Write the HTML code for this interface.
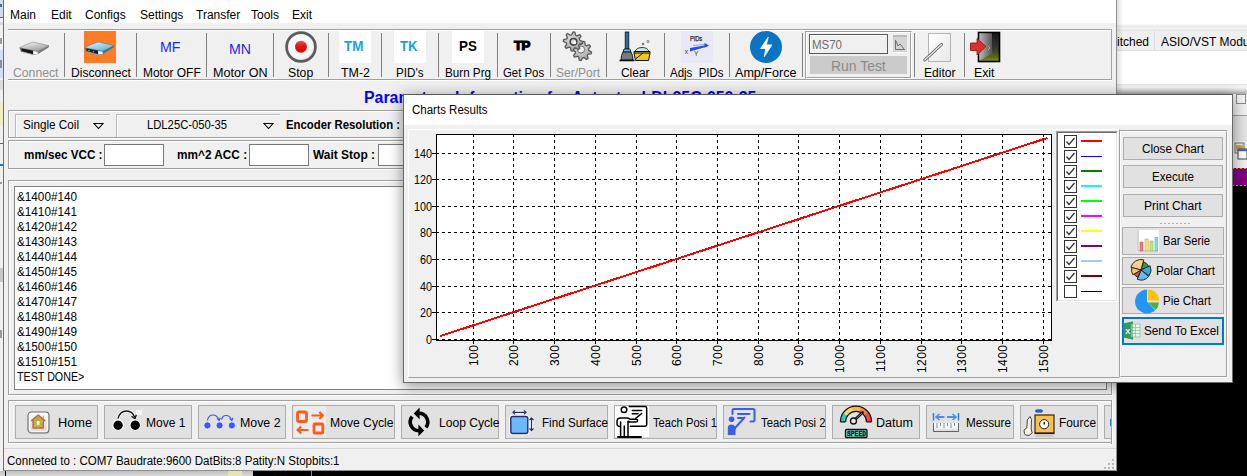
<!DOCTYPE html>
<html><head><meta charset="utf-8"><style>
html,body{margin:0;padding:0;}
body{width:1247px;height:476px;overflow:hidden;position:relative;font-family:'Liberation Sans', sans-serif;font-size:12px;}
.a{position:absolute;}
.t{position:absolute;white-space:pre;}
</style></head><body>
<div class="a" style="left:0px;top:0px;width:1247px;height:476px;background:#000"></div>
<div class="a" style="left:0px;top:0px;width:4px;height:471px;background:#f0f0f0"></div>
<div class="a" style="left:0px;top:0px;width:3px;height:17px;background:#d4dcea"></div>
<div class="a" style="left:0px;top:4px;width:2px;height:3px;background:#4070b0"></div>
<div class="a" style="left:0px;top:17px;width:3px;height:1px;background:#3a6ab0"></div>
<div class="a" style="left:0px;top:22px;width:3px;height:3px;background:#d8d8d8"></div>
<div class="a" style="left:0px;top:36px;width:3px;height:10px;background:#fafafa"></div>
<div class="a" style="left:0px;top:38px;width:2px;height:6px;background:#9a9a9a"></div>
<div class="a" style="left:0px;top:50px;width:3px;height:28px;background:#cfe0f4"></div>
<div class="a" style="left:0px;top:60px;width:2px;height:8px;background:#8a8aa0"></div>
<div class="a" style="left:0px;top:80px;width:3px;height:10px;background:#dcdcdc"></div>
<div class="a" style="left:0px;top:103px;width:3px;height:22px;background:#f2eec4"></div>
<div class="a" style="left:0px;top:143px;width:3px;height:1px;background:#666"></div>
<div class="a" style="left:0px;top:164px;width:3px;height:2px;background:#3070c0"></div>
<div class="a" style="left:0px;top:182px;width:2px;height:2px;background:#999"></div>
<div class="a" style="left:0px;top:268px;width:3px;height:14px;background:#c8c8c8"></div>
<div class="a" style="left:0px;top:330px;width:2px;height:8px;background:#999"></div>
<div class="a" style="left:0px;top:471px;width:253px;height:5px;background:linear-gradient(#c0c0c0,#dadada)"></div>
<div class="a" style="left:5px;top:471px;width:1px;height:5px;background:#000"></div>
<div class="a" style="left:228px;top:471px;width:14px;height:5px;background:#e8e4b0"></div>
<div class="a" style="left:311px;top:471px;width:1px;height:5px;background:#888"></div>
<div class="a" style="left:1117px;top:0px;width:130px;height:24px;background:#fff"></div>
<div class="a" style="left:1117px;top:24px;width:130px;height:7px;background:linear-gradient(#fff,#e8e8e8 30%,#f4f4f4 60%,#e0e0e0)"></div>
<div class="a" style="left:1117px;top:31px;width:130px;height:20px;background:#f0f0f0"></div>
<div class="a" style="left:1117px;top:50px;width:130px;height:1px;background:#dcdcdc"></div>
<div class="a" style="left:1154px;top:31px;width:1px;height:20px;background:#dcdcdc"></div>
<div class="t" style="left:1117.00px;top:36px;font-size:12px;line-height:12px;color:#000;">itched</div>
<div class="t" style="left:1161.00px;top:36px;font-size:12px;line-height:12px;color:#000;">ASIO/VST Module</div>
<div class="a" style="left:1117px;top:51px;width:130px;height:33px;background:#fff"></div>
<div class="a" style="left:1117px;top:84px;width:130px;height:10px;background:linear-gradient(#e4e4e4,#f8f8f8 30%,#dcdcdc 60%,#a8a8a8)"></div>
<div class="a" style="left:1232px;top:94px;width:15px;height:92px;background:#f0f0f0"></div>
<div class="a" style="left:1236px;top:94px;width:10px;height:10px;box-sizing:border-box;border:1px solid #8c8c8c;background:#f4f4f4"></div>
<div class="a" style="left:1232px;top:115px;width:15px;height:1px;background:#a0a0a0"></div>
<div class="a" style="left:1232px;top:116px;width:15px;height:25px;background:#e4e4e4"></div>
<div class="a" style="left:1232px;top:168px;width:15px;height:18px;background:#800080"></div>
<div class="a" style="left:1232px;top:168px;width:15px;height:1px;background:repeating-linear-gradient(90deg,#c8a800 0 2px,transparent 2px 4px)"></div>
<div class="a" style="left:1232px;top:185px;width:15px;height:1px;background:repeating-linear-gradient(90deg,#c8a800 0 2px,transparent 2px 4px)"></div>
<div class="a" style="left:3px;top:0px;width:1114px;height:471px;background:#f0f0f0;box-sizing:border-box;border-left:1px solid #707070;border-right:1px solid #909090;border-bottom:1px solid #909090"></div>
<div class="a" style="left:1117px;top:0px;width:6px;height:471px;background:linear-gradient(90deg,rgba(0,0,0,.12),rgba(0,0,0,0))"></div>
<div class="a" style="left:4px;top:0px;width:1112px;height:23px;background:#fff"></div>
<div class="t" style="left:10.00px;top:9px;font-size:12px;line-height:12px;color:#000;">Main</div>
<div class="t" style="left:51.00px;top:9px;font-size:12px;line-height:12px;color:#000;">Edit</div>
<div class="t" style="left:85.00px;top:9px;font-size:12px;line-height:12px;color:#000;">Configs</div>
<div class="t" style="left:140.00px;top:9px;font-size:12px;line-height:12px;color:#000;">Settings</div>
<div class="t" style="left:196.00px;top:9px;font-size:12px;line-height:12px;color:#000;">Transfer</div>
<div class="t" style="left:251.00px;top:9px;font-size:12px;line-height:12px;color:#000;">Tools</div>
<div class="t" style="left:292.00px;top:9px;font-size:12px;line-height:12px;color:#000;">Exit</div>
<div class="a" style="left:8px;top:29px;width:1104px;height:1px;background:#a0a0a0"></div>
<div class="a" style="left:8px;top:30px;width:1104px;height:1px;background:#fff"></div>
<div class="a" style="left:8px;top:79px;width:1104px;height:1px;background:#a0a0a0"></div>
<div class="a" style="left:8px;top:80px;width:1104px;height:1px;background:#fff"></div>
<div class="a" style="left:1111px;top:29px;width:1px;height:51px;background:#a0a0a0"></div>
<div class="a" style="left:64px;top:33px;width:1px;height:44px;background:#808080"></div>
<div class="a" style="left:136px;top:33px;width:1px;height:44px;background:#808080"></div>
<div class="a" style="left:206px;top:33px;width:1px;height:44px;background:#808080"></div>
<div class="a" style="left:273px;top:33px;width:1px;height:44px;background:#808080"></div>
<div class="a" style="left:328px;top:33px;width:1px;height:44px;background:#808080"></div>
<div class="a" style="left:381px;top:33px;width:1px;height:44px;background:#808080"></div>
<div class="a" style="left:438px;top:33px;width:1px;height:44px;background:#808080"></div>
<div class="a" style="left:497px;top:33px;width:1px;height:44px;background:#808080"></div>
<div class="a" style="left:550px;top:33px;width:1px;height:44px;background:#808080"></div>
<div class="a" style="left:606px;top:33px;width:1px;height:44px;background:#808080"></div>
<div class="a" style="left:664px;top:33px;width:1px;height:44px;background:#808080"></div>
<div class="a" style="left:729px;top:33px;width:1px;height:44px;background:#808080"></div>
<div class="a" style="left:802px;top:33px;width:1px;height:44px;background:#808080"></div>
<div class="a" style="left:914px;top:33px;width:1px;height:44px;background:#808080"></div>
<div class="a" style="left:964px;top:33px;width:1px;height:44px;background:#808080"></div>
<div class="t" style="left:12.75px;top:67px;font-size:12px;line-height:12px;color:#8f8f8f;transform:scaleX(1.0180);transform-origin:0 0;">Connect</div>
<div class="t" style="left:70.90px;top:67px;font-size:12px;line-height:12px;color:#000;transform:scaleX(1.0074);transform-origin:0 0;">Disconnect</div>
<div class="t" style="left:142.85px;top:67px;font-size:12px;line-height:12px;color:#000;transform:scaleX(0.9948);transform-origin:0 0;">Motor OFF</div>
<div class="t" style="left:212.55px;top:67px;font-size:12px;line-height:12px;color:#000;transform:scaleX(1.0479);transform-origin:0 0;">Motor ON</div>
<div class="t" style="left:288.00px;top:67px;font-size:12px;line-height:12px;color:#000;transform:scaleX(1.0208);transform-origin:0 0;">Stop</div>
<div class="t" style="left:340.70px;top:67px;font-size:12px;line-height:12px;color:#000;transform:scaleX(1.0359);transform-origin:0 0;">TM-2</div>
<div class="t" style="left:396.25px;top:67px;font-size:12px;line-height:12px;color:#000;transform:scaleX(0.9719);transform-origin:0 0;">PID's</div>
<div class="t" style="left:444.80px;top:67px;font-size:12px;line-height:12px;color:#000;transform:scaleX(0.9714);transform-origin:0 0;">Burn Prg</div>
<div class="t" style="left:503.25px;top:67px;font-size:12px;line-height:12px;color:#000;transform:scaleX(0.9480);transform-origin:0 0;">Get Pos</div>
<div class="t" style="left:556.25px;top:67px;font-size:12px;line-height:12px;color:#8f8f8f;transform:scaleX(1.0019);transform-origin:0 0;">Ser/Port</div>
<div class="t" style="left:621.25px;top:67px;font-size:12px;line-height:12px;color:#000;transform:scaleX(0.9939);transform-origin:0 0;">Clear</div>
<div class="t" style="left:670.25px;top:67px;font-size:12px;line-height:12px;color:#000;transform:scaleX(0.9551);transform-origin:0 0;">Adjs  PIDs</div>
<div class="t" style="left:735.25px;top:67px;font-size:12px;line-height:12px;color:#000;transform:scaleX(1.0480);transform-origin:0 0;">Amp/Force</div>
<div class="t" style="left:923.95px;top:67px;font-size:12px;line-height:12px;color:#000;transform:scaleX(1.0049);transform-origin:0 0;">Editor</div>
<div class="t" style="left:974.25px;top:67px;font-size:12px;line-height:12px;color:#000;transform:scaleX(1.0248);transform-origin:0 0;">Exit</div>
<svg class="a" style="left:1233px;top:142px;" width="14" height="18" viewBox="0 0 14 18"><rect x="2" y="1" width="9" height="10" fill="#f4e8b0" stroke="#555" stroke-width=".8"/>
<path d="M3 4 L10 4 M3 6 L10 6 M3 8 L10 8" stroke="#c04040" stroke-width=".8"/><path d="M3 5 L9 5" stroke="#40a040" stroke-width=".6"/>
<rect x="5" y="7" width="9" height="10" fill="#fff" stroke="#333" stroke-width=".9"/><rect x="5" y="7" width="9" height="2.2" fill="#3a6ad0"/></svg>
<div class="t" style="left:364.00px;top:90px;font-size:16px;line-height:16px;font-weight:bold;color:#0000ff;transform:scaleX(0.9933);transform-origin:0 0;">Parameters Information for Actuator LDL25C-050-35</div>
<div class="a" style="left:8px;top:110px;width:1105px;height:1px;background:#a0a0a0"></div>
<div class="a" style="left:8px;top:110px;width:1px;height:29px;background:#a0a0a0"></div>
<div class="a" style="left:9px;top:111px;width:1103px;height:1px;background:#fff"></div>
<div class="a" style="left:9px;top:111px;width:1px;height:27px;background:#fff"></div>
<div class="a" style="left:8px;top:137px;width:1104px;height:1px;background:#a0a0a0"></div>
<div class="a" style="left:1111px;top:110px;width:1px;height:28px;background:#a0a0a0"></div>
<div class="a" style="left:8px;top:138px;width:1105px;height:1px;background:#fff"></div>
<div class="a" style="left:1112px;top:110px;width:1px;height:29px;background:#fff"></div>
<div class="a" style="left:15px;top:114px;width:95px;height:1px;background:#b9b9b9"></div>
<div class="a" style="left:15px;top:114px;width:1px;height:23px;background:#b9b9b9"></div>
<div class="a" style="left:16px;top:115px;width:94px;height:1px;background:#fff"></div>
<div class="a" style="left:16px;top:115px;width:1px;height:22px;background:#fff"></div>
<div class="t" style="left:23.00px;top:119px;font-size:12px;line-height:12px;color:#000;transform:scaleX(0.9762);transform-origin:0 0;">Single Coil</div>
<svg class="a" style="left:93px;top:122px;" width="11" height="8" viewBox="0 0 11 8"><path d="M1 1.5 L10 1.5 L5.5 6.5 Z" fill="none" stroke="#000" stroke-width="1.1"/></svg>
<div class="a" style="left:116px;top:114px;width:164px;height:1px;background:#b9b9b9"></div>
<div class="a" style="left:116px;top:114px;width:1px;height:23px;background:#b9b9b9"></div>
<div class="a" style="left:117px;top:115px;width:163px;height:1px;background:#fff"></div>
<div class="a" style="left:117px;top:115px;width:1px;height:22px;background:#fff"></div>
<div class="t" style="left:147.00px;top:119px;font-size:12px;line-height:12px;color:#000;transform:scaleX(0.9369);transform-origin:0 0;">LDL25C-050-35</div>
<svg class="a" style="left:263px;top:122px;" width="11" height="8" viewBox="0 0 11 8"><path d="M1 1.5 L10 1.5 L5.5 6.5 Z" fill="none" stroke="#000" stroke-width="1.1"/></svg>
<div class="t" style="left:286.00px;top:119px;font-size:12px;line-height:12px;font-weight:bold;color:#000;transform:scaleX(0.9447);transform-origin:0 0;">Encoder Resolution :</div>
<div class="a" style="left:8px;top:140px;width:1105px;height:1px;background:#a0a0a0"></div>
<div class="a" style="left:8px;top:140px;width:1px;height:30px;background:#a0a0a0"></div>
<div class="a" style="left:9px;top:141px;width:1103px;height:1px;background:#fff"></div>
<div class="a" style="left:9px;top:141px;width:1px;height:28px;background:#fff"></div>
<div class="a" style="left:8px;top:168px;width:1104px;height:1px;background:#a0a0a0"></div>
<div class="a" style="left:1111px;top:140px;width:1px;height:29px;background:#a0a0a0"></div>
<div class="a" style="left:8px;top:169px;width:1105px;height:1px;background:#fff"></div>
<div class="a" style="left:1112px;top:140px;width:1px;height:30px;background:#fff"></div>
<div class="t" style="left:24.00px;top:149px;font-size:12px;line-height:12px;font-weight:bold;color:#000;transform:scaleX(0.9728);transform-origin:0 0;">mm/sec VCC :</div>
<div class="a" style="left:104px;top:144px;width:60px;height:22px;background:#fff;box-sizing:border-box;border:1px solid #7a7a7a"></div>
<div class="t" style="left:177.00px;top:149px;font-size:12px;line-height:12px;font-weight:bold;color:#000;transform:scaleX(0.9835);transform-origin:0 0;">mm^2 ACC :</div>
<div class="a" style="left:249px;top:144px;width:60px;height:22px;background:#fff;box-sizing:border-box;border:1px solid #7a7a7a"></div>
<div class="t" style="left:313.00px;top:149px;font-size:12px;line-height:12px;font-weight:bold;color:#000;transform:scaleX(0.9966);transform-origin:0 0;">Wait Stop :</div>
<div class="a" style="left:378px;top:144px;width:60px;height:22px;background:#fff;box-sizing:border-box;border:1px solid #7a7a7a"></div>
<div class="a" style="left:8px;top:180px;width:1105px;height:1px;background:#a0a0a0"></div>
<div class="a" style="left:8px;top:180px;width:1px;height:216px;background:#a0a0a0"></div>
<div class="a" style="left:9px;top:181px;width:1103px;height:1px;background:#fff"></div>
<div class="a" style="left:9px;top:181px;width:1px;height:214px;background:#fff"></div>
<div class="a" style="left:8px;top:394px;width:1104px;height:1px;background:#a0a0a0"></div>
<div class="a" style="left:1111px;top:180px;width:1px;height:215px;background:#a0a0a0"></div>
<div class="a" style="left:8px;top:395px;width:1105px;height:1px;background:#fff"></div>
<div class="a" style="left:1112px;top:180px;width:1px;height:216px;background:#fff"></div>
<div class="a" style="left:14px;top:186px;width:1093px;height:204px;background:#fff;box-sizing:border-box;border:1px solid #828282"></div>
<div class="t" style="left:16.50px;top:191px;font-size:12px;line-height:12px;color:#000;transform:scaleX(0.9773);transform-origin:0 0;">&amp;1400#140</div>
<div class="t" style="left:16.50px;top:206px;font-size:12px;line-height:12px;color:#000;transform:scaleX(0.9773);transform-origin:0 0;">&amp;1410#141</div>
<div class="t" style="left:16.50px;top:221px;font-size:12px;line-height:12px;color:#000;transform:scaleX(0.9773);transform-origin:0 0;">&amp;1420#142</div>
<div class="t" style="left:16.50px;top:236px;font-size:12px;line-height:12px;color:#000;transform:scaleX(0.9773);transform-origin:0 0;">&amp;1430#143</div>
<div class="t" style="left:16.50px;top:251px;font-size:12px;line-height:12px;color:#000;transform:scaleX(0.9773);transform-origin:0 0;">&amp;1440#144</div>
<div class="t" style="left:16.50px;top:266px;font-size:12px;line-height:12px;color:#000;transform:scaleX(0.9773);transform-origin:0 0;">&amp;1450#145</div>
<div class="t" style="left:16.50px;top:281px;font-size:12px;line-height:12px;color:#000;transform:scaleX(0.9773);transform-origin:0 0;">&amp;1460#146</div>
<div class="t" style="left:16.50px;top:296px;font-size:12px;line-height:12px;color:#000;transform:scaleX(0.9773);transform-origin:0 0;">&amp;1470#147</div>
<div class="t" style="left:16.50px;top:311px;font-size:12px;line-height:12px;color:#000;transform:scaleX(0.9773);transform-origin:0 0;">&amp;1480#148</div>
<div class="t" style="left:16.50px;top:326px;font-size:12px;line-height:12px;color:#000;transform:scaleX(0.9773);transform-origin:0 0;">&amp;1490#149</div>
<div class="t" style="left:16.50px;top:341px;font-size:12px;line-height:12px;color:#000;transform:scaleX(0.9773);transform-origin:0 0;">&amp;1500#150</div>
<div class="t" style="left:16.50px;top:356px;font-size:12px;line-height:12px;color:#000;transform:scaleX(0.9773);transform-origin:0 0;">&amp;1510#151</div>
<div class="t" style="left:16.50px;top:371px;font-size:12px;line-height:12px;color:#000;transform:scaleX(0.8919);transform-origin:0 0;">TEST DONE&gt;</div>
<div class="a" style="left:8px;top:400px;width:1105px;height:1px;background:#a0a0a0"></div>
<div class="a" style="left:8px;top:400px;width:1px;height:44px;background:#a0a0a0"></div>
<div class="a" style="left:9px;top:401px;width:1103px;height:1px;background:#fff"></div>
<div class="a" style="left:9px;top:401px;width:1px;height:42px;background:#fff"></div>
<div class="a" style="left:8px;top:442px;width:1104px;height:1px;background:#a0a0a0"></div>
<div class="a" style="left:1111px;top:400px;width:1px;height:43px;background:#a0a0a0"></div>
<div class="a" style="left:8px;top:443px;width:1105px;height:1px;background:#fff"></div>
<div class="a" style="left:1112px;top:400px;width:1px;height:44px;background:#fff"></div>
<div class="a" style="left:15px;top:405px;width:83px;height:34px;background:#e1e1e1;box-sizing:border-box;border:1px solid #adadad"></div>
<div class="t" style="left:58.00px;top:417px;font-size:12px;line-height:12px;color:#000;transform:scaleX(1.0622);transform-origin:0 0;">Home</div>
<div class="a" style="left:104px;top:405px;width:88px;height:34px;background:#e1e1e1;box-sizing:border-box;border:1px solid #adadad"></div>
<div class="t" style="left:146.00px;top:417px;font-size:12px;line-height:12px;color:#000;transform:scaleX(1.0038);transform-origin:0 0;">Move 1</div>
<div class="a" style="left:198px;top:405px;width:88px;height:34px;background:#e1e1e1;box-sizing:border-box;border:1px solid #adadad"></div>
<div class="t" style="left:239.50px;top:417px;font-size:12px;line-height:12px;color:#000;transform:scaleX(1.0292);transform-origin:0 0;">Move 2</div>
<div class="a" style="left:292px;top:405px;width:103px;height:34px;background:#e1e1e1;box-sizing:border-box;border:1px solid #adadad"></div>
<div class="t" style="left:329.50px;top:417px;font-size:12px;line-height:12px;color:#000;transform:scaleX(1.0130);transform-origin:0 0;">Move Cycle</div>
<div class="a" style="left:401px;top:405px;width:98px;height:34px;background:#e1e1e1;box-sizing:border-box;border:1px solid #adadad"></div>
<div class="t" style="left:438.50px;top:417px;font-size:12px;line-height:12px;color:#000;transform:scaleX(1.0077);transform-origin:0 0;">Loop Cycle</div>
<div class="a" style="left:505px;top:405px;width:103px;height:34px;background:#e1e1e1;box-sizing:border-box;border:1px solid #adadad"></div>
<div class="t" style="left:542.00px;top:417px;font-size:12px;line-height:12px;color:#000;transform:scaleX(0.9701);transform-origin:0 0;">Find Surface</div>
<div class="a" style="left:614px;top:405px;width:103px;height:34px;background:#e1e1e1;box-sizing:border-box;border:1px solid #adadad"></div>
<div class="t" style="left:652.50px;top:417px;font-size:12px;line-height:12px;color:#000;transform:scaleX(0.9315);transform-origin:0 0;">Teach Posi 1</div>
<div class="a" style="left:723px;top:405px;width:103px;height:34px;background:#e1e1e1;box-sizing:border-box;border:1px solid #adadad"></div>
<div class="t" style="left:761.10px;top:417px;font-size:12px;line-height:12px;color:#000;transform:scaleX(0.9388);transform-origin:0 0;">Teach Posi 2</div>
<div class="a" style="left:832px;top:405px;width:88px;height:34px;background:#e1e1e1;box-sizing:border-box;border:1px solid #adadad"></div>
<div class="t" style="left:876.00px;top:417px;font-size:12px;line-height:12px;color:#000;transform:scaleX(1.0469);transform-origin:0 0;">Datum</div>
<div class="a" style="left:926px;top:405px;width:88px;height:34px;background:#e1e1e1;box-sizing:border-box;border:1px solid #adadad"></div>
<div class="t" style="left:965.90px;top:417px;font-size:12px;line-height:12px;color:#000;transform:scaleX(0.9780);transform-origin:0 0;">Messure</div>
<div class="a" style="left:1020px;top:405px;width:78px;height:34px;background:#e1e1e1;box-sizing:border-box;border:1px solid #adadad"></div>
<div class="t" style="left:1059.00px;top:417px;font-size:12px;line-height:12px;color:#000;transform:scaleX(0.9907);transform-origin:0 0;">Fource</div>
<div class="a" style="left:1104px;top:405px;width:8px;height:34px;background:#e1e1e1;box-sizing:border-box;border:1px solid #adadad;border-right:none"></div>
<div class="a" style="left:1110px;top:419px;width:1px;height:7px;background:#1a8ad8"></div>
<div class="a" style="left:1111px;top:400px;width:1px;height:44px;background:#a0a0a0"></div>
<div class="a" style="left:1112px;top:400px;width:1px;height:44px;background:#fff"></div>
<div class="a" style="left:4px;top:448px;width:1112px;height:1px;background:#d7d7d7"></div>
<div class="t" style="left:7.00px;top:455px;font-size:12px;line-height:12px;color:#000;transform:scaleX(0.9605);transform-origin:0 0;">Conneted to : COM7 Baudrate:9600 DatBits:8 Patity:N Stopbits:1</div>
<div class="a" style="left:1112px;top:459px;width:2px;height:2px;background:#b8b8b8"></div>
<div class="a" style="left:1108px;top:463px;width:2px;height:2px;background:#b8b8b8"></div>
<div class="a" style="left:1112px;top:463px;width:2px;height:2px;background:#b8b8b8"></div>
<div class="a" style="left:1104px;top:467px;width:2px;height:2px;background:#b8b8b8"></div>
<div class="a" style="left:1108px;top:467px;width:2px;height:2px;background:#b8b8b8"></div>
<div class="a" style="left:1112px;top:467px;width:2px;height:2px;background:#b8b8b8"></div>
<div class="a" style="left:403px;top:94px;width:830px;height:289px;background:#f0f0f0;box-shadow:0 3px 14px rgba(0,0,0,.45);box-sizing:border-box;border:1px solid #6a6a6a;border-top-color:#5a5a5a"></div>
<div class="a" style="left:404px;top:95px;width:828px;height:30px;background:#fff"></div>
<div class="t" style="left:412.00px;top:104px;font-size:12px;line-height:12px;color:#000;transform:scaleX(0.9594);transform-origin:0 0;">Charts Results</div>
<div class="a" style="left:408px;top:129px;width:712px;height:249px;box-sizing:border-box;border:1px solid;border-color:#fff #a0a0a0 #a0a0a0 #fff"></div>
<div class="a" style="left:1119px;top:130px;width:109px;height:248px;box-sizing:border-box;border:1px solid;border-color:#a0a0a0 #fff #fff #a0a0a0"></div>
<div class="a" style="left:1120px;top:131px;width:107px;height:246px;box-sizing:border-box;border:1px solid;border-color:#fff #a0a0a0 #a0a0a0 #fff"></div>
<div class="a" style="left:436px;top:134px;width:616px;height:207px;background:#fff;box-sizing:border-box;border:1px solid #000"></div>
<svg class="a" style="left:0px;top:0px;pointer-events:none;shape-rendering:crispEdges" width="1247" height="476" viewBox="0 0 1247 476"><line x1="473.5" y1="134" x2="473.5" y2="340" stroke="#000" stroke-dasharray="3 3"/><line x1="473.5" y1="340" x2="473.5" y2="344" stroke="#000"/><line x1="513.5" y1="134" x2="513.5" y2="340" stroke="#000" stroke-dasharray="3 3"/><line x1="513.5" y1="340" x2="513.5" y2="344" stroke="#000"/><line x1="554.5" y1="134" x2="554.5" y2="340" stroke="#000" stroke-dasharray="3 3"/><line x1="554.5" y1="340" x2="554.5" y2="344" stroke="#000"/><line x1="595.5" y1="134" x2="595.5" y2="340" stroke="#000" stroke-dasharray="3 3"/><line x1="595.5" y1="340" x2="595.5" y2="344" stroke="#000"/><line x1="636.5" y1="134" x2="636.5" y2="340" stroke="#000" stroke-dasharray="3 3"/><line x1="636.5" y1="340" x2="636.5" y2="344" stroke="#000"/><line x1="676.5" y1="134" x2="676.5" y2="340" stroke="#000" stroke-dasharray="3 3"/><line x1="676.5" y1="340" x2="676.5" y2="344" stroke="#000"/><line x1="717.5" y1="134" x2="717.5" y2="340" stroke="#000" stroke-dasharray="3 3"/><line x1="717.5" y1="340" x2="717.5" y2="344" stroke="#000"/><line x1="758.5" y1="134" x2="758.5" y2="340" stroke="#000" stroke-dasharray="3 3"/><line x1="758.5" y1="340" x2="758.5" y2="344" stroke="#000"/><line x1="798.5" y1="134" x2="798.5" y2="340" stroke="#000" stroke-dasharray="3 3"/><line x1="798.5" y1="340" x2="798.5" y2="344" stroke="#000"/><line x1="839.5" y1="134" x2="839.5" y2="340" stroke="#000" stroke-dasharray="3 3"/><line x1="839.5" y1="340" x2="839.5" y2="344" stroke="#000"/><line x1="880.5" y1="134" x2="880.5" y2="340" stroke="#000" stroke-dasharray="3 3"/><line x1="880.5" y1="340" x2="880.5" y2="344" stroke="#000"/><line x1="921.5" y1="134" x2="921.5" y2="340" stroke="#000" stroke-dasharray="3 3"/><line x1="921.5" y1="340" x2="921.5" y2="344" stroke="#000"/><line x1="961.5" y1="134" x2="961.5" y2="340" stroke="#000" stroke-dasharray="3 3"/><line x1="961.5" y1="340" x2="961.5" y2="344" stroke="#000"/><line x1="1002.5" y1="134" x2="1002.5" y2="340" stroke="#000" stroke-dasharray="3 3"/><line x1="1002.5" y1="340" x2="1002.5" y2="344" stroke="#000"/><line x1="1043.5" y1="134" x2="1043.5" y2="340" stroke="#000" stroke-dasharray="3 3"/><line x1="1043.5" y1="340" x2="1043.5" y2="344" stroke="#000"/><line x1="436" y1="339.5" x2="1051" y2="339.5" stroke="#000" stroke-dasharray="3 3"/><line x1="432" y1="339.5" x2="439" y2="339.5" stroke="#000"/><line x1="436" y1="312.5" x2="1051" y2="312.5" stroke="#000" stroke-dasharray="3 3"/><line x1="432" y1="312.5" x2="439" y2="312.5" stroke="#000"/><line x1="436" y1="286.5" x2="1051" y2="286.5" stroke="#000" stroke-dasharray="3 3"/><line x1="432" y1="286.5" x2="439" y2="286.5" stroke="#000"/><line x1="436" y1="259.5" x2="1051" y2="259.5" stroke="#000" stroke-dasharray="3 3"/><line x1="432" y1="259.5" x2="439" y2="259.5" stroke="#000"/><line x1="436" y1="232.5" x2="1051" y2="232.5" stroke="#000" stroke-dasharray="3 3"/><line x1="432" y1="232.5" x2="439" y2="232.5" stroke="#000"/><line x1="436" y1="206.5" x2="1051" y2="206.5" stroke="#000" stroke-dasharray="3 3"/><line x1="432" y1="206.5" x2="439" y2="206.5" stroke="#000"/><line x1="436" y1="179.5" x2="1051" y2="179.5" stroke="#000" stroke-dasharray="3 3"/><line x1="432" y1="179.5" x2="439" y2="179.5" stroke="#000"/><line x1="436" y1="153.5" x2="1051" y2="153.5" stroke="#000" stroke-dasharray="3 3"/><line x1="432" y1="153.5" x2="439" y2="153.5" stroke="#000"/><polyline points="440,335.9 440.9,335.8 445.0,334.5 449.1,333.2 453.1,331.9 457.2,330.5 461.3,329.2 465.4,327.9 469.4,326.5 473.5,325.2 477.6,323.9 481.6,322.6 485.7,321.2 489.8,319.9 493.9,318.6 497.9,317.2 502.0,315.9 506.1,314.6 510.1,313.3 514.2,311.9 518.3,310.6 522.4,309.3 526.4,307.9 530.5,306.6 534.6,305.3 538.6,304.0 542.7,302.6 546.8,301.3 550.9,300.0 554.9,298.6 559.0,297.3 563.1,296.0 567.1,294.7 571.2,293.3 575.3,292.0 579.4,290.7 583.4,289.3 587.5,288.0 591.6,286.7 595.6,285.4 599.7,284.0 603.8,282.7 607.9,281.4 611.9,280.0 616.0,278.7 620.1,277.4 624.1,276.1 628.2,274.7 632.3,273.4 636.4,272.1 640.4,270.7 644.5,269.4 648.6,268.1 652.6,266.8 656.7,265.4 660.8,264.1 664.9,262.8 668.9,261.4 673.0,260.1 677.1,258.8 681.1,257.5 685.2,256.1 689.3,254.8 693.4,253.5 697.4,252.1 701.5,250.8 705.6,249.5 709.6,248.2 713.7,246.8 717.8,245.5 721.9,244.2 725.9,242.8 730.0,241.5 734.1,240.2 738.1,238.9 742.2,237.5 746.3,236.2 750.4,234.9 754.4,233.5 758.5,232.2 762.6,230.9 766.6,229.6 770.7,228.2 774.8,226.9 778.9,225.6 782.9,224.2 787.0,222.9 791.1,221.6 795.1,220.3 799.2,218.9 803.3,217.6 807.4,216.3 811.4,214.9 815.5,213.6 819.6,212.3 823.6,211.0 827.7,209.6 831.8,208.3 835.9,207.0 839.9,205.6 844.0,204.3 848.1,203.0 852.1,201.7 856.2,200.3 860.3,199.0 864.4,197.7 868.4,196.3 872.5,195.0 876.6,193.7 880.6,192.4 884.7,191.0 888.8,189.7 892.9,188.4 896.9,187.0 901.0,185.7 905.1,184.4 909.1,183.1 913.2,181.7 917.3,180.4 921.4,179.1 925.4,177.7 929.5,176.4 933.6,175.1 937.6,173.8 941.7,172.4 945.8,171.1 949.9,169.8 953.9,168.4 958.0,167.1 962.1,165.8 966.1,164.5 970.2,163.1 974.3,161.8 978.4,160.5 982.4,159.1 986.5,157.8 990.6,156.5 994.6,155.2 998.7,153.8 1002.8,152.5 1006.9,151.2 1010.9,149.8 1015.0,148.5 1019.1,147.2 1023.1,145.9 1027.2,144.5 1031.3,143.2 1035.4,141.9 1039.4,140.5 1043.5,139.2 1047.6,137.9" fill="none" stroke="#ff0000" stroke-width="2"/></svg>
<div class="t" style="left:425.50px;top:334px;font-size:12px;line-height:12px;color:#000;transform:scaleX(0.8990);transform-origin:0 0;">0</div>
<div class="t" style="left:419.50px;top:307px;font-size:12px;line-height:12px;color:#000;transform:scaleX(0.8990);transform-origin:0 0;">20</div>
<div class="t" style="left:419.50px;top:281px;font-size:12px;line-height:12px;color:#000;transform:scaleX(0.8990);transform-origin:0 0;">40</div>
<div class="t" style="left:419.50px;top:254px;font-size:12px;line-height:12px;color:#000;transform:scaleX(0.8990);transform-origin:0 0;">60</div>
<div class="t" style="left:419.50px;top:227px;font-size:12px;line-height:12px;color:#000;transform:scaleX(0.8990);transform-origin:0 0;">80</div>
<div class="t" style="left:413.50px;top:201px;font-size:12px;line-height:12px;color:#000;transform:scaleX(0.8990);transform-origin:0 0;">100</div>
<div class="t" style="left:413.50px;top:174px;font-size:12px;line-height:12px;color:#000;transform:scaleX(0.8990);transform-origin:0 0;">120</div>
<div class="t" style="left:413.50px;top:148px;font-size:12px;line-height:12px;color:#000;transform:scaleX(0.8990);transform-origin:0 0;">140</div>
<div class="t" style="left:467.5px;top:345px;width:12px;height:30px;font-size:12px;line-height:12px;letter-spacing:.4px;writing-mode:vertical-rl;transform:rotate(180deg);text-align:right">100</div>
<div class="t" style="left:507.5px;top:345px;width:12px;height:30px;font-size:12px;line-height:12px;letter-spacing:.4px;writing-mode:vertical-rl;transform:rotate(180deg);text-align:right">200</div>
<div class="t" style="left:548.5px;top:345px;width:12px;height:30px;font-size:12px;line-height:12px;letter-spacing:.4px;writing-mode:vertical-rl;transform:rotate(180deg);text-align:right">300</div>
<div class="t" style="left:589.5px;top:345px;width:12px;height:30px;font-size:12px;line-height:12px;letter-spacing:.4px;writing-mode:vertical-rl;transform:rotate(180deg);text-align:right">400</div>
<div class="t" style="left:630.5px;top:345px;width:12px;height:30px;font-size:12px;line-height:12px;letter-spacing:.4px;writing-mode:vertical-rl;transform:rotate(180deg);text-align:right">500</div>
<div class="t" style="left:670.5px;top:345px;width:12px;height:30px;font-size:12px;line-height:12px;letter-spacing:.4px;writing-mode:vertical-rl;transform:rotate(180deg);text-align:right">600</div>
<div class="t" style="left:711.5px;top:345px;width:12px;height:30px;font-size:12px;line-height:12px;letter-spacing:.4px;writing-mode:vertical-rl;transform:rotate(180deg);text-align:right">700</div>
<div class="t" style="left:752.5px;top:345px;width:12px;height:30px;font-size:12px;line-height:12px;letter-spacing:.4px;writing-mode:vertical-rl;transform:rotate(180deg);text-align:right">800</div>
<div class="t" style="left:792.5px;top:345px;width:12px;height:30px;font-size:12px;line-height:12px;letter-spacing:.4px;writing-mode:vertical-rl;transform:rotate(180deg);text-align:right">900</div>
<div class="t" style="left:833.5px;top:345px;width:12px;height:30px;font-size:12px;line-height:12px;letter-spacing:.4px;writing-mode:vertical-rl;transform:rotate(180deg);text-align:right">1000</div>
<div class="t" style="left:874.5px;top:345px;width:12px;height:30px;font-size:12px;line-height:12px;letter-spacing:.4px;writing-mode:vertical-rl;transform:rotate(180deg);text-align:right">1100</div>
<div class="t" style="left:915.5px;top:345px;width:12px;height:30px;font-size:12px;line-height:12px;letter-spacing:.4px;writing-mode:vertical-rl;transform:rotate(180deg);text-align:right">1200</div>
<div class="t" style="left:955.5px;top:345px;width:12px;height:30px;font-size:12px;line-height:12px;letter-spacing:.4px;writing-mode:vertical-rl;transform:rotate(180deg);text-align:right">1300</div>
<div class="t" style="left:996.5px;top:345px;width:12px;height:30px;font-size:12px;line-height:12px;letter-spacing:.4px;writing-mode:vertical-rl;transform:rotate(180deg);text-align:right">1400</div>
<div class="t" style="left:1037.5px;top:345px;width:12px;height:30px;font-size:12px;line-height:12px;letter-spacing:.4px;writing-mode:vertical-rl;transform:rotate(180deg);text-align:right">1500</div>
<div class="a" style="left:1056px;top:131px;width:62px;height:171px;box-sizing:border-box;border:1px solid;border-color:#a0a0a0 #fff #fff #a0a0a0"></div>
<div class="a" style="left:1057px;top:132px;width:60px;height:169px;background:#fff;box-sizing:border-box;border:1px solid;border-color:#696969 #e3e3e3 #e3e3e3 #696969"></div>
<div class="a" style="left:1064px;top:135px;width:13px;height:13px;box-sizing:border-box;border:1px solid #333;background:#fff"></div>
<svg class="a" style="left:1064px;top:135px;" width="13" height="13" viewBox="0 0 13 13"><path d="M2.5 6.5 L5 9.5 L10.5 3" fill="none" stroke="#333" stroke-width="1.3"/></svg>
<div class="a" style="left:1081px;top:140px;width:21px;height:2px;background:#ff0000"></div>
<div class="a" style="left:1064px;top:150px;width:13px;height:13px;box-sizing:border-box;border:1px solid #333;background:#fff"></div>
<svg class="a" style="left:1064px;top:150px;" width="13" height="13" viewBox="0 0 13 13"><path d="M2.5 6.5 L5 9.5 L10.5 3" fill="none" stroke="#333" stroke-width="1.3"/></svg>
<div class="a" style="left:1081px;top:156px;width:21px;height:1px;background:#0000ff"></div>
<div class="a" style="left:1064px;top:165px;width:13px;height:13px;box-sizing:border-box;border:1px solid #333;background:#fff"></div>
<svg class="a" style="left:1064px;top:165px;" width="13" height="13" viewBox="0 0 13 13"><path d="M2.5 6.5 L5 9.5 L10.5 3" fill="none" stroke="#333" stroke-width="1.3"/></svg>
<div class="a" style="left:1081px;top:170px;width:21px;height:2px;background:#008000"></div>
<div class="a" style="left:1064px;top:180px;width:13px;height:13px;box-sizing:border-box;border:1px solid #333;background:#fff"></div>
<svg class="a" style="left:1064px;top:180px;" width="13" height="13" viewBox="0 0 13 13"><path d="M2.5 6.5 L5 9.5 L10.5 3" fill="none" stroke="#333" stroke-width="1.3"/></svg>
<div class="a" style="left:1081px;top:185px;width:21px;height:2px;background:#00ffff"></div>
<div class="a" style="left:1064px;top:195px;width:13px;height:13px;box-sizing:border-box;border:1px solid #333;background:#fff"></div>
<svg class="a" style="left:1064px;top:195px;" width="13" height="13" viewBox="0 0 13 13"><path d="M2.5 6.5 L5 9.5 L10.5 3" fill="none" stroke="#333" stroke-width="1.3"/></svg>
<div class="a" style="left:1081px;top:200px;width:21px;height:2px;background:#00ff00"></div>
<div class="a" style="left:1064px;top:210px;width:13px;height:13px;box-sizing:border-box;border:1px solid #333;background:#fff"></div>
<svg class="a" style="left:1064px;top:210px;" width="13" height="13" viewBox="0 0 13 13"><path d="M2.5 6.5 L5 9.5 L10.5 3" fill="none" stroke="#333" stroke-width="1.3"/></svg>
<div class="a" style="left:1081px;top:215px;width:21px;height:2px;background:#ff00ff"></div>
<div class="a" style="left:1064px;top:225px;width:13px;height:13px;box-sizing:border-box;border:1px solid #333;background:#fff"></div>
<svg class="a" style="left:1064px;top:225px;" width="13" height="13" viewBox="0 0 13 13"><path d="M2.5 6.5 L5 9.5 L10.5 3" fill="none" stroke="#333" stroke-width="1.3"/></svg>
<div class="a" style="left:1081px;top:230px;width:21px;height:2px;background:#ffff00"></div>
<div class="a" style="left:1064px;top:240px;width:13px;height:13px;box-sizing:border-box;border:1px solid #333;background:#fff"></div>
<svg class="a" style="left:1064px;top:240px;" width="13" height="13" viewBox="0 0 13 13"><path d="M2.5 6.5 L5 9.5 L10.5 3" fill="none" stroke="#333" stroke-width="1.3"/></svg>
<div class="a" style="left:1081px;top:245px;width:21px;height:2px;background:#800080"></div>
<div class="a" style="left:1064px;top:255px;width:13px;height:13px;box-sizing:border-box;border:1px solid #333;background:#fff"></div>
<svg class="a" style="left:1064px;top:255px;" width="13" height="13" viewBox="0 0 13 13"><path d="M2.5 6.5 L5 9.5 L10.5 3" fill="none" stroke="#333" stroke-width="1.3"/></svg>
<div class="a" style="left:1081px;top:260px;width:21px;height:2px;background:#a6caf0"></div>
<div class="a" style="left:1064px;top:270px;width:13px;height:13px;box-sizing:border-box;border:1px solid #333;background:#fff"></div>
<svg class="a" style="left:1064px;top:270px;" width="13" height="13" viewBox="0 0 13 13"><path d="M2.5 6.5 L5 9.5 L10.5 3" fill="none" stroke="#333" stroke-width="1.3"/></svg>
<div class="a" style="left:1081px;top:275px;width:21px;height:2px;background:#800000"></div>
<div class="a" style="left:1064px;top:285px;width:13px;height:13px;box-sizing:border-box;border:1px solid #333;background:#fff"></div>
<div class="a" style="left:1081px;top:291px;width:21px;height:1px;background:#000000"></div>
<div class="a" style="left:1123px;top:137px;width:100px;height:23px;background:#e1e1e1;box-sizing:border-box;border:1px solid #adadad"></div>
<div class="t" style="left:1141.50px;top:143px;font-size:12px;line-height:12px;color:#000;transform:scaleX(0.9786);transform-origin:0 0;">Close Chart</div>
<div class="a" style="left:1123px;top:165px;width:100px;height:23px;background:#e1e1e1;box-sizing:border-box;border:1px solid #adadad"></div>
<div class="t" style="left:1151.50px;top:171px;font-size:12px;line-height:12px;color:#000;transform:scaleX(0.9686);transform-origin:0 0;">Execute</div>
<div class="a" style="left:1123px;top:194px;width:100px;height:23px;background:#e1e1e1;box-sizing:border-box;border:1px solid #adadad"></div>
<div class="t" style="left:1143.50px;top:200px;font-size:12px;line-height:12px;color:#000;transform:scaleX(1.0026);transform-origin:0 0;">Print Chart</div>
<div class="a" style="left:1160px;top:223px;width:2px;height:1px;background:#b0b0b0"></div>
<div class="a" style="left:1164px;top:223px;width:2px;height:1px;background:#b0b0b0"></div>
<div class="a" style="left:1168px;top:223px;width:2px;height:1px;background:#b0b0b0"></div>
<div class="a" style="left:1172px;top:223px;width:2px;height:1px;background:#b0b0b0"></div>
<div class="a" style="left:1176px;top:223px;width:2px;height:1px;background:#b0b0b0"></div>
<div class="a" style="left:1180px;top:223px;width:2px;height:1px;background:#b0b0b0"></div>
<div class="a" style="left:1184px;top:223px;width:2px;height:1px;background:#b0b0b0"></div>
<div class="a" style="left:1188px;top:223px;width:2px;height:1px;background:#b0b0b0"></div>
<div class="a" style="left:1122px;top:227px;width:102px;height:28px;background:#e1e1e1;box-sizing:border-box;border:1px solid #adadad"></div>
<div class="t" style="left:1163.00px;top:235px;font-size:12px;line-height:12px;color:#000;transform:scaleX(0.9396);transform-origin:0 0;">Bar Serie</div>
<div class="a" style="left:1122px;top:257px;width:102px;height:28px;background:#e1e1e1;box-sizing:border-box;border:1px solid #adadad"></div>
<div class="t" style="left:1156.00px;top:265px;font-size:12px;line-height:12px;color:#000;transform:scaleX(0.9721);transform-origin:0 0;">Polar Chart</div>
<div class="a" style="left:1122px;top:287px;width:102px;height:27px;background:#e1e1e1;box-sizing:border-box;border:1px solid #adadad"></div>
<div class="t" style="left:1162.50px;top:295px;font-size:12px;line-height:12px;color:#000;transform:scaleX(0.9596);transform-origin:0 0;">Pie Chart</div>
<div class="a" style="left:1122px;top:317px;width:102px;height:28px;box-sizing:border-box;border:2px solid #0078d7;background:#e1e1e1"></div>
<div class="t" style="left:1143.50px;top:325px;font-size:12px;line-height:12px;color:#000;transform:scaleX(0.9777);transform-origin:0 0;">Send To Excel</div>
<svg class="a" style="left:14px;top:36px;" width="40" height="26" viewBox="0 0 40 26"><defs><linearGradient id="rtc" x1="0" y1="0" x2=".6" y2="1"><stop offset="0" stop-color="#fafafa"/><stop offset="1" stop-color="#9c9c9c"/></linearGradient></defs>
<path d="M5.5 11.7 Q12 8.2 19.1 6 L35 9.6 Q30 12.6 23.6 15.3 Z" fill="url(#rtc)" stroke="#7a7a7a" stroke-width=".5"/>
<path d="M5.5 11.7 L23.6 15.3 L24 18 L19.1 18.9 L7.1 15.8 Z" fill="#6a6a6a"/>
<path d="M23.6 15.3 L35 9.6 L34.6 11.6 L24 18 Z" fill="#7a7a7a"/>
<path d="M7.6 12.5 L19 14.7 L19 18.4 L7.8 15.4 Z" fill="#151515"/>
<path d="M19.2 15 L23.5 15.7 L23.8 17.9 L19.2 18.5 Z" fill="#f8f8f8"/>
<path d="M8 15.6 L19 18.6" stroke="#fff" stroke-width=".6" opacity=".7"/></svg>
<div class="a" style="left:84px;top:31px;width:32px;height:32px;background:#fd7b25"></div>
<svg class="a" style="left:79px;top:36px;" width="40" height="26" viewBox="0 0 40 26"><defs><linearGradient id="rtd" x1="0" y1="0" x2=".6" y2="1"><stop offset="0" stop-color="#e4f6fc"/><stop offset="1" stop-color="#6ab4d4"/></linearGradient></defs>
<path d="M5.5 11.7 Q12 8.2 19.1 6 L35 9.6 Q30 12.6 23.6 15.3 Z" fill="url(#rtd)" stroke="#2e7aa0" stroke-width=".5"/>
<path d="M5.5 11.7 L23.6 15.3 L24 18 L19.1 18.9 L7.1 15.8 Z" fill="#3c7c9c"/>
<path d="M23.6 15.3 L35 9.6 L34.6 11.6 L24 18 Z" fill="#2e7aa0"/>
<path d="M7.6 12.5 L19 14.7 L19 18.4 L7.8 15.4 Z" fill="#10202a"/>
<path d="M19.2 15 L23.5 15.7 L23.8 17.9 L19.2 18.5 Z" fill="#f8f8f8"/>
<path d="M8 15.6 L19 18.6" stroke="#fff" stroke-width=".6" opacity=".7"/><circle cx="10" cy="14.6" r=".8" fill="#3cd23c"/><circle cx="14.5" cy="15.6" r=".8" fill="#3cd23c"/></svg>
<div class="t" style="left:160.00px;top:40px;font-size:14px;line-height:14px;color:#1f1fff;transform:scaleX(1.0142);transform-origin:0 0;">MF</div>
<div class="t" style="left:229.00px;top:42px;font-size:14px;line-height:14px;color:#1f1fff;transform:scaleX(1.0105);transform-origin:0 0;">MN</div>
<svg class="a" style="left:284px;top:31px;" width="34" height="34" viewBox="0 0 34 34"><defs><radialGradient id="stg" cx=".45" cy=".4" r=".6"><stop offset="0" stop-color="#fff"/><stop offset=".8" stop-color="#f4f4f4"/><stop offset="1" stop-color="#d8d8d8"/></radialGradient>
<linearGradient id="strd" x1="0" y1="0" x2="0" y2="1"><stop offset="0" stop-color="#e85050"/><stop offset=".45" stop-color="#dd1818"/><stop offset="1" stop-color="#e00000"/></linearGradient></defs>
<circle cx="17" cy="16" r="14.4" fill="url(#stg)" stroke="#5c5c5c" stroke-width="2.8"/>
<circle cx="17" cy="15.8" r="6" fill="url(#strd)"/></svg>
<div class="a" style="left:339px;top:31px;width:32px;height:32px;background:#fff"></div>
<div class="t" style="left:344.00px;top:39px;font-size:14px;line-height:14px;font-weight:bold;color:#1ba1e2;transform:scaleX(0.9647);transform-origin:0 0;">TM</div>
<div class="a" style="left:394px;top:31px;width:32px;height:32px;background:#fff"></div>
<div class="t" style="left:399.50px;top:39px;font-size:14px;line-height:14px;font-weight:bold;color:#1ba1e2;transform:scaleX(0.9377);transform-origin:0 0;">TK</div>
<div class="a" style="left:452px;top:31px;width:32px;height:32px;background:#fff"></div>
<div class="t" style="left:458.50px;top:39px;font-size:14px;line-height:14px;font-weight:bold;color:#000;transform:scaleX(0.9531);transform-origin:0 0;">PS</div>
<div class="t" style="left:513.50px;top:40px;font-size:12px;line-height:12px;font-weight:bold;color:#000;transform:scaleX(1.1086);transform-origin:0 0;-webkit-text-stroke:1.1px #000;letter-spacing:-.5px;">TP</div>
<svg class="a" style="left:560px;top:30px;" width="38" height="36" viewBox="0 0 38 36"><defs><radialGradient id="ggr" cx=".4" cy=".35" r=".75"><stop offset="0" stop-color="#dcdcdc"/><stop offset=".7" stop-color="#b0b0b0"/><stop offset="1" stop-color="#808080"/></radialGradient></defs><polygon points="31.55,21.94 31.19,23.79 28.00,24.21 27.26,25.31 28.09,28.42 26.53,29.47 23.97,27.51 22.67,27.77 21.06,30.55 19.21,30.19 18.79,27.00 17.69,26.26 14.58,27.09 13.53,25.53 15.49,22.97 15.23,21.67 12.45,20.06 12.81,18.21 16.00,17.79 16.74,16.69 15.91,13.58 17.47,12.53 20.03,14.49 21.33,14.23 22.94,11.45 24.79,11.81 25.21,15.00 26.31,15.74 29.42,14.91 30.47,16.47 28.51,19.03 28.77,20.33" fill="url(#ggr)" stroke="#5a5a5a" stroke-width="1.3" stroke-linejoin="round"/><circle cx="21" cy="19.5" r="3.6" fill="#f0f0f0" stroke="#6a6a6a" stroke-width="1"/><polygon points="22.60,11.50 22.42,13.37 19.28,14.10 18.65,15.28 19.79,18.29 18.33,19.48 15.60,17.78 14.33,18.17 13.00,21.10 11.13,20.92 10.40,17.78 9.22,17.15 6.21,18.29 5.02,16.83 6.72,14.10 6.33,12.83 3.40,11.50 3.58,9.63 6.72,8.90 7.35,7.72 6.21,4.71 7.67,3.52 10.40,5.22 11.67,4.83 13.00,1.90 14.87,2.08 15.60,5.22 16.78,5.85 19.79,4.71 20.98,6.17 19.28,8.90 19.67,10.17" fill="url(#ggr)" stroke="#5a5a5a" stroke-width="1.3" stroke-linejoin="round"/><circle cx="13.5" cy="11.8" r="3.3" fill="#d8d8d8" stroke="#444" stroke-width="1.6"/><circle cx="14.6" cy="12.6" r="1.6" fill="#fff"/></svg>
<svg class="a" style="left:618px;top:30px;" width="36" height="34" viewBox="0 0 36 34">
<rect x="7.2" y="2" width="3.6" height="17" fill="#2a6aa0" stroke="#111" stroke-width=".8"/>
<path d="M6 19 L12 19 L13 22 L5 22 Z" fill="#58b8f0" stroke="#111" stroke-width=".8"/>
<path d="M5 22 L13 22 Q15 25 15 30 L3 30 Q3 25 5 22 Z" fill="#7a7a7a" stroke="#111" stroke-width=".9"/>
<path d="M1.5 30.5 L16.5 30.5" stroke="#111" stroke-width="1.6"/>
<path d="M17 22 Q18 17.5 24 17.5 Q30 17.5 31 22 Z" fill="#bfe6fb" stroke="#111" stroke-width=".8"/>
<path d="M16 21.5 L32 21.5 L32 23 L30.5 30.5 L17.5 30.5 L16 23 Z" fill="#f5c518" stroke="#111" stroke-width="1"/>
<path d="M16 23 L32 23" stroke="#111" stroke-width="1"/>
<path d="M17.5 29 L25 23" stroke="#111" stroke-width="1"/>
<circle cx="25" cy="14" r="1.3" fill="#777"/><circle cx="30" cy="11.5" r="1.1" fill="none" stroke="#777" stroke-width=".9"/></svg>
<div class="a" style="left:681px;top:31px;width:32px;height:32px;background:#e9e8f7"></div>
<div class="t" style="left:690px;top:35px;font-size:8px;line-height:8px;color:#222;transform:scaleX(.72);transform-origin:0 0;letter-spacing:-.2px;-webkit-text-stroke:.25px #222">PIDs</div>
<svg class="a" style="left:681px;top:31px;" width="32" height="32" viewBox="0 0 32 32"><path d="M9 17 L26 14 L26.5 15.5 L9 20.5 Z" fill="#2a4de0"/>
<path d="M12 14.5 L26 13.2" stroke="#7a9ae8" stroke-width=".8"/><path d="M23.5 12 L28 14.5 L23.5 16.5" fill="#2a4de0"/>
<text x="3.8" y="22.5" font-size="6.5" font-family="Liberation Sans" fill="#333">x</text>
<text x="13" y="24.5" font-size="6.5" font-family="Liberation Sans" fill="#333">Y</text></svg>
<svg class="a" style="left:749px;top:30px;" width="34" height="34" viewBox="0 0 34 34"><circle cx="17" cy="17" r="16" fill="#0b74c2"/>
<path d="M19.2 7.3 L11.6 18.4 L16.9 18.4 L15.3 26.6 L22.9 14.9 L17.3 14.9 Z" fill="#fff" stroke="#fff" stroke-width=".8" stroke-linejoin="round"/></svg>
<div class="a" style="left:805px;top:31px;width:107px;height:48px;box-sizing:border-box;border:1px solid;border-color:#a0a0a0 #fff #fff #a0a0a0"></div>
<div class="a" style="left:806px;top:32px;width:105px;height:46px;box-sizing:border-box;border:1px solid;border-color:#fff #a0a0a0 #a0a0a0 #fff"></div>
<div class="a" style="left:809px;top:34px;width:79px;height:20px;background:#f0f0f0;box-sizing:border-box;border:1px solid #595959;box-shadow:inset 1px 1px 0 #fff"></div>
<div class="t" style="left:812.00px;top:39px;font-size:12px;line-height:12px;color:#6d6d6d;transform:scaleX(0.9570);transform-origin:0 0;">MS70</div>
<div class="a" style="left:893px;top:35px;width:14px;height:18px;background:#d4d4d4;box-sizing:border-box;border-top:2px solid #bcbcbc;border-bottom:1px solid #fff"></div>
<svg class="a" style="left:893px;top:35px;" width="14" height="18" viewBox="0 0 14 18"><path d="M2.5 5 L2.5 14.5 L12 14.5" fill="none" stroke="#555" stroke-width=".8"/><path d="M3 6 L5 11 L7 9 L11 14" fill="none" stroke="#555" stroke-width=".8"/></svg>
<div class="a" style="left:810px;top:56px;width:97px;height:18px;background:#cbcbcb"></div>
<div class="t" style="left:831.00px;top:58px;font-size:15px;line-height:15px;color:#8b8b8b;transform:scaleX(0.9291);transform-origin:0 0;">Run Test</div>
<svg class="a" style="left:922px;top:31px;" width="32" height="34" viewBox="0 0 32 34"><defs><linearGradient id="edg" x1="0" y1="0" x2="1" y2="1"><stop offset="0" stop-color="#fff"/><stop offset="1" stop-color="#e8e8e8"/></linearGradient></defs>
<rect x="6.5" y="2.5" width="22" height="28" fill="url(#edg)" stroke="#b4b4b4"/>
<path d="M2.8 29 L19.5 13.5" stroke="#555" stroke-width="3" stroke-linecap="round"/>
<path d="M2.8 29 L19.5 13.5" stroke="#e8e8e8" stroke-width="1.4" stroke-linecap="round"/></svg>
<svg class="a" style="left:968px;top:30px;" width="36" height="34" viewBox="0 0 36 34"><defs><linearGradient id="exd" x1="0" y1="0" x2="0" y2="1"><stop offset="0" stop-color="#151515"/><stop offset=".6" stop-color="#3a3a3a"/><stop offset=".85" stop-color="#5a6a10"/><stop offset="1" stop-color="#8a9a18"/></linearGradient>
<linearGradient id="exl" x1="0" y1="0" x2="1" y2="0"><stop offset="0" stop-color="#b8b8b8"/><stop offset="1" stop-color="#555"/></linearGradient></defs>
<rect x="10.5" y="2.5" width="21" height="29" fill="url(#exd)" stroke="#000" stroke-width="1.6"/>
<path d="M11.3 3.3 L24 3.3 L24 24 L11.3 30.5 Z" fill="url(#exl)"/>
<path d="M20 16 L22 18 L20 20" fill="none" stroke="#ccc" stroke-width=".6"/>
<path d="M2.5 13 L9 13 L9 8.5 L18 16.5 L9 25 L9 20.5 L2.5 20.5 Z" fill="#d93030" stroke="#a01818" stroke-width=".9" stroke-linejoin="round"/></svg>
<svg class="a" style="left:26px;top:410px;" width="26" height="25" viewBox="0 0 26 25"><defs><linearGradient id="hmg" x1="0" y1="0" x2="0" y2="1"><stop offset="0" stop-color="#fafafa"/><stop offset="1" stop-color="#d8d8d8"/></linearGradient></defs>
<rect x="2" y="2" width="21" height="21" rx="3.5" fill="url(#hmg)" stroke="#6a6a6a" stroke-width="1.1"/>
<rect x="3.6" y="3.6" width="17.8" height="17.8" rx="2.5" fill="none" stroke="#fff" stroke-width=".9"/>
<path d="M5.5 10.5 L12.2 5 L18.8 10.5 L17.3 10.5 L17.3 18 L7 18 L7 10.5 Z" fill="#b8ae48" stroke="#c4603c" stroke-width="1.3" stroke-linejoin="round"/>
<path d="M16.5 7 L17.5 5.5 L18 8.5" fill="#e87848"/>
<path d="M7.5 11 L12 13 L17 11 M12 13 L12 18 M8 17.5 L12 13 L16.5 17.5" stroke="#d8cc70" stroke-width=".6" fill="none"/>
<rect x="10.8" y="11" width="2.8" height="3.8" fill="#fcf6a0"/></svg>
<svg class="a" style="left:110px;top:407px;" width="34" height="26" viewBox="0 0 34 26"><rect x="26" y="3" width="6" height="5" fill="#f4f4f4"/>
<path d="M8 11.5 Q10 4 16.5 4 Q22.5 4 24.8 10.5" fill="none" stroke="#fff" stroke-width="3"/>
<path d="M8 11.5 Q10 4 16.5 4 Q22.5 4 24.8 10.5" fill="none" stroke="#111" stroke-width="1.3"/>
<path d="M21.5 9.3 L25 11.8 L26.3 7.8" fill="none" stroke="#111" stroke-width="1.3"/>
<circle cx="8.1" cy="18.2" r="5.3" fill="#000" stroke="#fff" stroke-width="1.2"/>
<circle cx="25.2" cy="18.2" r="5.3" fill="#000" stroke="#fff" stroke-width="1.2"/></svg>
<svg class="a" style="left:202px;top:410px;" width="36" height="22" viewBox="0 0 36 22"><path d="M5.4 10.5 Q6.5 5 11 5 Q15 5 17 10" fill="none" stroke="#3c5ae8" stroke-width="1.2"/>
<path d="M15 8.3 L17.2 10.5 L18.3 7.7" fill="none" stroke="#3c5ae8" stroke-width="1.2"/>
<path d="M19.6 9.5 Q20.5 5.5 24 5.5 Q28 5.5 29.6 10" fill="none" stroke="#3c5ae8" stroke-width="1.2"/>
<path d="M27.6 8.3 L29.8 10.5 L30.9 7.7" fill="none" stroke="#3c5ae8" stroke-width="1.2"/>
<circle cx="5.4" cy="15.4" r="3.6" fill="#3c5ae8" stroke="#fff" stroke-width=".8"/>
<circle cx="17.6" cy="15.4" r="3.6" fill="#3c5ae8" stroke="#fff" stroke-width=".8"/>
<circle cx="29.9" cy="15.4" r="3.6" fill="#3c5ae8" stroke="#fff" stroke-width=".8"/></svg>
<svg class="a" style="left:293px;top:405px;" width="34" height="33" viewBox="0 0 34 33"><rect x="1" y="1" width="32" height="31" fill="#ececec"/>
<rect x="4.5" y="7" width="9" height="9.5" rx="1.5" fill="none" stroke="#fe5a1a" stroke-width="2.8"/>
<rect x="21" y="19" width="8.8" height="9" rx=".8" fill="none" stroke="#fe5a1a" stroke-width="2.8"/>
<path d="M18.5 10.5 L30 10.5 M26.3 7 L30 10.5 L26.3 14" fill="none" stroke="#fe5a1a" stroke-width="2.2" stroke-linejoin="round"/>
<path d="M15.5 25 L4.5 25 M8.2 21.5 L4.5 25 L8.2 28.5" fill="none" stroke="#fe5a1a" stroke-width="2.2" stroke-linejoin="round"/></svg>
<svg class="a" style="left:405px;top:404px;" width="28" height="36" viewBox="0 0 28 36"><path d="M14 9.25 A8.75 8.75 0 0 1 20.9 23.4" fill="none" stroke="#000" stroke-width="3.6"/>
<path d="M8.8 9.5 L14.6 3.6 L14.6 15.2 Z" fill="#000"/>
<path d="M14 26.75 A8.75 8.75 0 0 1 7.1 12.6" fill="none" stroke="#000" stroke-width="3.6"/>
<path d="M19.2 26.5 L13.4 20.6 L13.4 32.2 Z" fill="#000"/></svg>
<svg class="a" style="left:507px;top:407px;" width="30" height="30" viewBox="0 0 30 30"><g stroke="#fff" stroke-width="3.5" stroke-linejoin="round" fill="#fff">
<rect x="3.8" y="9.5" width="17" height="17" rx="2"/><path d="M6 5.3 L19 5.3 M24.5 11 L24.5 23.5"/></g>
<rect x="3.8" y="9.5" width="17" height="17" rx="2" fill="#6cb8f8" stroke="#2a2a6a" stroke-width="1.4"/>
<path d="M6 5.3 L19 5.3 M8 3.3 L6 5.3 L8 7.3 M17 3.3 L19 5.3 L17 7.3" fill="none" stroke="#2a2a6a" stroke-width="1.2"/>
<path d="M24.5 11 L24.5 23.5 M22.5 13 L24.5 11 L26.5 13 M22.5 21.5 L24.5 23.5 L26.5 21.5" fill="none" stroke="#2a2a6a" stroke-width="1.2"/></svg>
<div class="a" style="left:615px;top:406px;width:34px;height:31px;background:#fff"></div>
<svg class="a" style="left:613px;top:404px;" width="36" height="36" viewBox="0 0 36 36"><g fill="none" stroke="#000" stroke-width="1.5" stroke-linejoin="round" stroke-linecap="round">
<path d="M16.3 2.6 L32 2.6 Q33.7 2.6 33.7 4.3 L33.7 20.6 Q33.7 22.3 32 22.3 L17.4 22.3"/>
<path d="M19.3 6.4 L28.7 6.4 M19.3 9.8 L25 9.8 M22.7 14.4 L28.7 9.5"/>
<circle cx="11" cy="5.7" r="2.8"/>
<path d="M7.6 32.3 L7.6 22.6 Q4 22.6 4 19.5 L4 17.5 Q4 14 7.6 14 L14 14 Q15.5 14 17 15.2 L23 15.2 Q24.8 15.4 24.6 16.8 Q24.4 18 23 18 L17 18 L15 17.2 L15 32.3 M11.3 32.3 L11.3 22 M7.6 22.6 L7.6 18"/></g>
<path d="M4.2 33 L28.7 33" stroke="#000" stroke-width="2"/></svg>
<svg class="a" style="left:725px;top:405px;" width="34" height="32" viewBox="0 0 34 32"><g fill="none" stroke="#3b5de8" stroke-width="2" stroke-linecap="round" stroke-linejoin="round">
<path d="M7.5 9 L7.5 5.5 Q7.5 4 9 4 L28 4 Q29.5 4 29.5 5.5 L29.5 15 Q29.5 16.5 28 16.5 L25.5 16.5"/>
<path d="M13 9 L24.5 9 M13 13 L18 13 M19.5 12.5 L10 23"/></g>
<circle cx="6.6" cy="14.2" r="2.8" fill="#3b5de8"/>
<path d="M2.8 30 L2.8 23 Q2.8 19.5 6.5 19.5 Q9 19.5 10 21.5 L11 23 L10.5 25.5 L10.5 30 Z" fill="#3b5de8"/></svg>
<svg class="a" style="left:838px;top:405px;" width="36" height="34" viewBox="0 0 36 34"><path d="M5.00 16.80 A13 13 0 0 1 7.35 9.34" fill="none" stroke="#3cc8c0" stroke-width="5"/><path d="M7.35 9.34 A13 13 0 0 1 13.98 4.44" fill="none" stroke="#f8d868" stroke-width="5"/><path d="M13.98 4.44 A13 13 0 0 1 22.02 4.44" fill="none" stroke="#f4b848" stroke-width="5"/><path d="M22.02 4.44 A13 13 0 0 1 27.96 8.44" fill="none" stroke="#f08838" stroke-width="5"/><path d="M27.96 8.44 A13 13 0 0 1 31.00 16.80" fill="none" stroke="#f04848" stroke-width="5"/><path d="M2.4000000000000004 16.8 A15.6 15.6 0 0 1 33.6 16.8 M7.6 16.8 A10.4 10.4 0 0 1 28.4 16.8 M2.4000000000000004 16.8 L7.6 16.8 M33.6 16.8 L28.4 16.8" fill="none" stroke="#111" stroke-width="1.2"/>
<path d="M15.5 16 L24.5 7.5" stroke="#111" stroke-width="2.8" stroke-linecap="round"/><path d="M16 15.5 L24 8" stroke="#777" stroke-width="1"/>
<circle cx="15.5" cy="16" r="3" fill="#e8e8e8" stroke="#111" stroke-width="1.3"/>
<rect x="7.5" y="24.5" width="21.5" height="8" rx="1" fill="#70e0d0" stroke="#111" stroke-width="1.3"/>
<text x="9" y="31.2" font-size="7.5" font-weight="bold" font-family="Liberation Mono" fill="#111" stroke="#111" stroke-width=".3" textLength="19" lengthAdjust="spacingAndGlyphs">SPEED</text></svg>
<svg class="a" style="left:930px;top:409px;" width="32" height="26" viewBox="0 0 32 26"><defs><linearGradient id="rlg" x1="0" y1="0" x2="0" y2="1"><stop offset="0" stop-color="#fff"/><stop offset=".6" stop-color="#f4f4f4"/><stop offset="1" stop-color="#d8d8dc"/></linearGradient></defs>
<path d="M3.5 4 L3.5 11.5 M28.5 4 L28.5 11.5" stroke="#2a80f0" stroke-width="1.5"/>
<path d="M6.5 8 L14.5 8 M17 8 L25.5 8" stroke="#4a90f0" stroke-width="1.8"/>
<path d="M9.5 5 L6 8 L9.5 11 M22.5 5 L26 8 L22.5 11" fill="none" stroke="#4a90f0" stroke-width="1.6"/>
<rect x="3" y="14" width="26" height="8" fill="url(#rlg)"/>
<path d="M3.5 14 L3.5 22.5 L28.5 22.5 L28.5 14" fill="none" stroke="#555" stroke-width=".9"/>
<path d="M7 14 L7 19 M10.5 14 L10.5 17 M14 14 L14 19 M17.5 14 L17.5 17 M21 14 L21 19 M24.5 14 L24.5 17" stroke="#8a8a8a" stroke-width="1"/></svg>
<svg class="a" style="left:1021px;top:406px;" width="36" height="32" viewBox="0 0 36 32"><rect x="14" y="9" width="19" height="18.5" fill="#f8c050" stroke="#3a2410" stroke-width="1.2"/>
<path d="M14 27.2 L33 27.2" stroke="#2a1a08" stroke-width="1.6"/>
<rect x="14.5" y="28.5" width="18" height="2.5" fill="#c8c8c8"/>
<circle cx="23.2" cy="18.2" r="4.6" fill="#f4f8fc" stroke="#222" stroke-width="1"/>
<path d="M23.2 16 L23.2 18.5" stroke="#111" stroke-width="1.4"/>
<rect x="14.5" y="3.7" width="7" height="2.6" rx="1.3" fill="#1a6ad8" stroke="#0a2a6a" stroke-width=".5"/>
<path d="M3.5 27.5 L3 24 L5.8 22 L6.3 14 L9 10.5 L10.5 13.5 L10.2 23 L11.2 27 L8 29.5 L4.5 29 Z" fill="#f8f0e0" stroke="#333" stroke-width=".9" stroke-linejoin="round"/></svg>
<svg class="a" style="left:1137px;top:230px;" width="22" height="22" viewBox="0 0 22 22"><rect x="0" y="0" width="22" height="22" fill="#fff"/>
<path d="M1 0 L1 21 L21 21" fill="none" stroke="#9a9a9a" stroke-width=".8"/>
<rect x="3" y="12" width="3" height="9" fill="#f08080" stroke="#b05050" stroke-width=".5"/>
<rect x="8" y="9" width="3.2" height="12" fill="#f8e080" stroke="#b0a050" stroke-width=".5"/>
<rect x="13" y="11" width="3" height="10" fill="#c0e890" stroke="#80a050" stroke-width=".5"/>
<rect x="18" y="7.5" width="2.8" height="13.5" fill="#80e0f0" stroke="#50a0b0" stroke-width=".5"/></svg>
<svg class="a" style="left:1129px;top:258px;" width="24" height="24" viewBox="0 0 24 24"><path d="M12 12 L1.86 9.28 A10.5 10.5 0 0 1 14.72 1.86 Z" fill="#f8d088" stroke="#1a1a1a" stroke-width=".9" stroke-linejoin="round"/><path d="M12 12 L14.63 3.92 A8.5 8.5 0 0 1 19.70 8.41 Z" fill="#2aa050" stroke="#1a1a1a" stroke-width=".9" stroke-linejoin="round"/><path d="M12 12 L21.06 7.77 A10 10 0 0 1 20.19 17.74 Z" fill="#40a8e8" stroke="#1a1a1a" stroke-width=".9" stroke-linejoin="round"/><path d="M12 12 L19.66 18.43 A10 10 0 0 1 8.25 21.27 Z" fill="#60c0f0" stroke="#1a1a1a" stroke-width=".9" stroke-linejoin="round"/><path d="M12 12 L9.00 19.42 A8 8 0 0 1 5.07 16.00 Z" fill="#e04848" stroke="#1a1a1a" stroke-width=".9" stroke-linejoin="round"/><path d="M12 12 L3.77 16.75 A9.5 9.5 0 0 1 2.82 9.54 Z" fill="#f8c868" stroke="#1a1a1a" stroke-width=".9" stroke-linejoin="round"/></svg>
<svg class="a" style="left:1134px;top:288px;" width="28" height="28" viewBox="0 0 28 28"><path d="M13 13.5 L13 1.5 A12 12 0 1 0 21.2 22.3 Z" fill="#2196f3"/>
<path d="M14 12.5 L14 1.5 A11 11 0 0 1 25 12.5 Z" fill="#ffc107"/>
<path d="M14.2 14.5 L25 14.5 A11 11 0 0 1 21.5 22 Z" fill="#4caf50"/></svg>
<svg class="a" style="left:1123px;top:321px;" width="18" height="19" viewBox="0 0 18 19"><path d="M0.5 2.5 L10 0.5 L10 18.5 L0.5 16.5 Z" fill="#1e7145"/>
<rect x="8" y="3" width="9" height="13" fill="#e8f4ec" stroke="#6ab88a" stroke-width=".6"/>
<path d="M8 6.5 L17 6.5 M8 9.5 L17 9.5 M8 12.5 L17 12.5 M12.5 3 L12.5 16" stroke="#6ab88a" stroke-width=".6"/>
<path d="M0.5 2.5 L10 0.5 L10 18.5 L0.5 16.5 Z" fill="#4caf6a" opacity=".6"/>
<text x="2.2" y="12.5" font-size="7.5" font-weight="bold" font-family="Liberation Sans" fill="#fff">X</text></svg>
</body></html>
